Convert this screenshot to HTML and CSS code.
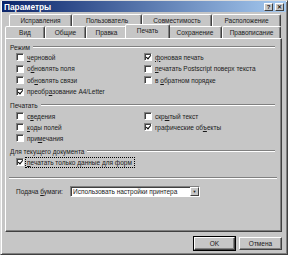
FILE: index.html
```html
<!DOCTYPE html>
<html lang="ru">
<head>
    <meta charset="UTF-8">
    <title>Параметры</title>
    <link rel="stylesheet" href="styles.css">
</head>
<body>
    <div class="window">
        <div class="titlebar">
            <span class="title">Параметры</span>
            <div class="caption-btns">
                <span class="cbtn">?</span>
                <span class="cbtn close">✕</span>
            </div>
        </div>

        <div class="client">
            <div class="tabs">
                <div class="tab-row back">
                    <span class="tab w63">Исправления</span>
                    <span class="tab w70">Пользователь</span>
                    <span class="tab w70">Совместимость</span>
                    <span class="tab w69">Расположение</span>
                </div>
                <div class="tab-row front">
                    <span class="tab w40">Вид</span>
                    <span class="tab w41">Общие</span>
                    <span class="tab w41">Правка</span>
                    <span class="tab w41 active">Печать</span>
                    <span class="tab w54">Сохранение</span>
                    <span class="tab w59">Правописание</span>
                </div>
            </div>

            <div class="panel">
                <div class="group-title"><span>Режим</span><i class="etch"></i></div>
                <div class="opts mode">
                    <label class="opt"><span class="cb"></span><span><u>ч</u>ерновой</span></label>
                    <label class="opt"><span class="cb checked"></span><span><u>ф</u>оновая печать</span></label>
                    <label class="opt"><span class="cb"></span><span>о<u>б</u>новлять поля</span></label>
                    <label class="opt"><span class="cb"></span><span><u>п</u>ечатать Postscript поверх текста</span></label>
                    <label class="opt"><span class="cb"></span><span>об<u>н</u>овлять связи</span></label>
                    <label class="opt"><span class="cb"></span><span>в <u>о</u>братном порядке</span></label>
                    <label class="opt"><span class="cb checked"></span><span>преобр<u>а</u>зование A4/Letter</span></label>
                </div>

                <div class="group-title spaced"><span>Печатать</span><i class="etch"></i></div>
                <div class="opts print">
                    <label class="opt"><span class="cb"></span><span>с<u>в</u>едения</span></label>
                    <label class="opt"><span class="cb"></span><span>скр<u>ы</u>тый текст</span></label>
                    <label class="opt"><span class="cb"></span><span><u>к</u>оды полей</span></label>
                    <label class="opt"><span class="cb checked"></span><span>графические об<u>ъ</u>екты</span></label>
                    <label class="opt"><span class="cb"></span><span>при<u>м</u>ечания</span></label>
                </div>

                <div class="group-title doc"><span>Для текущего документа</span><i class="etch"></i></div>
                <div class="opts single">
                    <label class="opt"><span class="cb checked"></span><span class="focus"><u>п</u>ечатать только данные для форм</span></label>
                </div>

                <div class="separator"></div>

                <div class="paper-row">
                    <span class="paper-label">Подача <u>б</u>умаги:</span>
                    <div class="select">
                        <span class="select-text">Использовать настройки принтера</span>
                        <span class="select-arrow">▼</span>
                    </div>
                </div>
            </div>

            <div class="buttons">
                <button class="btn default">OK</button>
                <button class="btn">Отмена</button>
            </div>
        </div>
    </div>
</body>
</html>
```

FILE: styles.css
```css
/* General Reset */
* {
    margin: 0;
    padding: 0;
    box-sizing: border-box;
}

body {
    font-family: 'Liberation Sans', Arial, sans-serif;
    font-size: 6.5px;
    color: #1a1a1a;
    background: #c6c6c6;
}

.window {
    width: 288px;
    height: 255px;
    display: flex;
    flex-direction: column;
    background: #c6c6c6;
    border: 1px solid;
    border-color: #dcdcdc #404040 #404040 #dcdcdc;
    box-shadow: inset 1px 1px 0 #fff, inset -1px -1px 0 #808080;
    padding: 0 1px;
}

.titlebar {
    height: 11px;
    flex: none;
    display: flex;
    align-items: center;
    justify-content: space-between;
    background: linear-gradient(to right, #0a246a, #a6caf0);
    padding: 0 2px 0 2px;
}

.title {
    color: #fff;
    font-weight: 700;
    font-size: 8.3px;
}

.caption-btns {
    display: flex;
    gap: 1px;
}

.cbtn {
    width: 9px;
    height: 8px;
    background: #c6c6c6;
    border: 1px solid;
    border-color: #fff #404040 #404040 #fff;
    font-size: 6px;
    font-weight: 700;
    line-height: 6px;
    text-align: center;
}

.cbtn.close {
    margin-left: 1px;
}

.client {
    flex: 1;
    display: flex;
    flex-direction: column;
    padding: 2px 4px 4px 3px;
}

.tabs {
    height: 24px;
    flex: none;
}

.tab-row {
    display: flex;
    height: 12px;
}

.tab-row.back {
    margin-left: 4px;
}

.tab {
    height: 12px;
    border: 1px solid;
    border-bottom: none;
    border-color: #fff #404040 transparent #fff;
    border-radius: 2px 2px 0 0;
    box-shadow: inset -1px 0 0 #808080;
    display: flex;
    align-items: center;
    justify-content: center;
    white-space: nowrap;
    background: #c6c6c6;
}

.tab.active {
    height: 14px;
    margin: -2px -2px -1px;
    padding: 0 2px;
    position: relative;
    z-index: 1;
    align-items: flex-start;
    padding-top: 2px;
}

.w40 { width: 40px; }
.w41 { width: 41px; }
.w54 { width: 54px; }
.w59 { width: 59px; }
.w63 { width: 63px; }
.w69 { width: 69px; }
.w70 { width: 70px; }

.tab.w41.active { width: 45px; }

.panel {
    flex: 1;
    border: 1px solid;
    border-color: #fff #404040 #404040 #fff;
    box-shadow: inset -1px -1px 0 #808080;
    padding: 4px 6px 0 4px;
}

.group-title {
    display: flex;
    align-items: center;
    height: 8px;
    white-space: nowrap;
}

.group-title span {
    margin-right: 3px;
}

.etch {
    flex: 1;
    height: 2px;
    border-top: 1px solid #808080;
    border-bottom: 1px solid #fff;
}

.group-title.spaced {
    margin-top: 4px;
}

.group-title.doc {
    margin-top: 3.5px;
}

.opts {
    display: grid;
    grid-template-columns: 128px 1fr;
    padding-left: 6px;
}

.opts.mode {
    grid-auto-rows: 11.5px;
    margin-top: 0.25px;
}

.opts.print {
    grid-auto-rows: 11px;
    margin-top: 1.5px;
}

.opts.single {
    grid-auto-rows: 11px;
    margin-top: 1.5px;
}

.opt {
    display: flex;
    align-items: center;
    gap: 3px;
    white-space: nowrap;
}

.cb {
    width: 8px;
    height: 8px;
    flex: none;
    background: #fff;
    border: 1px solid;
    border-color: #808080 #fff #fff #808080;
    box-shadow: inset 1px 1px 0 #404040;
    position: relative;
}

.cb.checked::after {
    content: "";
    position: absolute;
    left: 1.5px;
    top: 0;
    width: 2px;
    height: 4px;
    border: solid #000;
    border-width: 0 1.5px 1.5px 0;
    transform: rotate(40deg);
}

.focus {
    outline: 1px dotted #000;
    outline-offset: 1px;
    padding-right: 1px;
}

.separator {
    margin: 9.5px -2px 0 -1px;
    height: 2px;
    border-top: 1px solid #808080;
    border-bottom: 1px solid #fff;
}

.paper-row {
    display: flex;
    align-items: center;
    margin-top: 7px;
    height: 10px;
    padding-left: 6px;
}

.paper-label {
    width: 54px;
}

.select {
    width: 130px;
    height: 11px;
    display: flex;
    background: #fff;
    border: 1px solid;
    border-color: #808080 #fff #fff #808080;
    box-shadow: inset 1px 1px 0 #404040;
}

.select-text {
    flex: 1;
    padding-left: 2px;
    line-height: 9px;
    white-space: nowrap;
    overflow: hidden;
}

.select-arrow {
    width: 9px;
    height: 9px;
    background: #c6c6c6;
    border: 1px solid;
    border-color: #fff #404040 #404040 #fff;
    font-size: 4px;
    line-height: 7px;
    text-align: center;
}

.buttons {
    display: flex;
    flex: none;
    justify-content: flex-end;
    gap: 4px;
    margin-top: 5px;
}

.btn {
    height: 13px;
    background: #c6c6c6;
    border: 1px solid;
    border-color: #fff #404040 #404040 #fff;
    box-shadow: inset -1px -1px 0 #808080;
    font-family: 'Liberation Sans', Arial, sans-serif;
    font-size: 6.5px;
    color: #1a1a1a;
    width: 43px;
}

.btn.default {
    width: 41px;
    outline: 1px solid #000;
}
```
